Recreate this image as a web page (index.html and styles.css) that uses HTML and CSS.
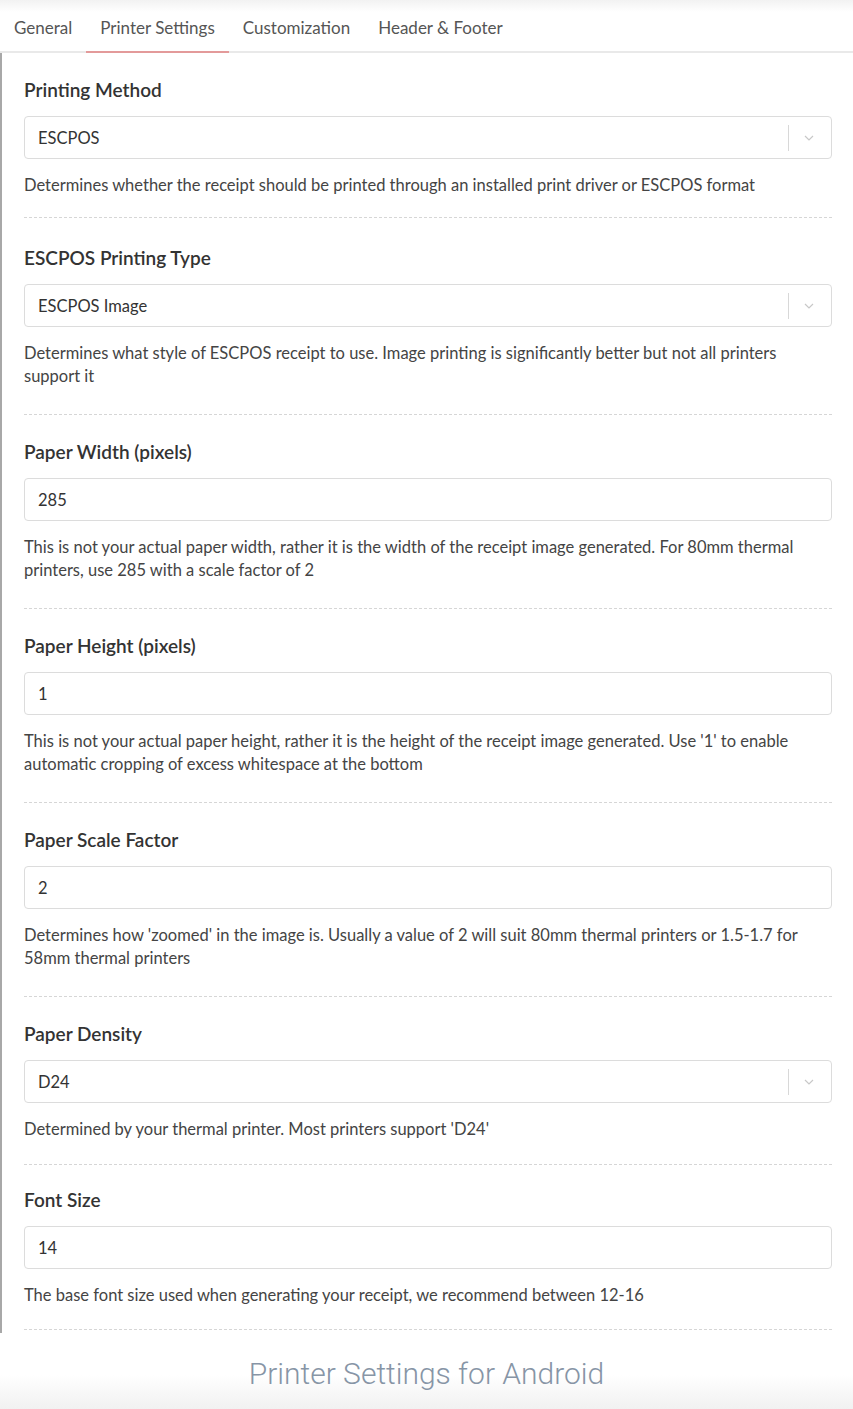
FILE: index.html
```html
<!DOCTYPE html>
<html lang="en">
<head>
<meta charset="utf-8">
<title>Printer Settings for Android</title>
<link rel="stylesheet" href="styles.css">
</head>
<body>
<div class="frame">
  <nav class="tabs">
    <span class="tab">General</span>
    <span class="tab active">Printer Settings</span>
    <span class="tab">Customization</span>
    <span class="tab">Header &amp; Footer</span>
  </nav>
  <div class="form">
    <section class="field">
      <h3 class="label">Printing Method</h3>
      <div class="control select"><span class="value">ESCPOS</span><span class="sep"></span><svg class="chev" width="10" height="6" viewBox="0 0 10 6"><path d="M1 1l4 4 4-4" fill="none" stroke="#c8c8c8" stroke-width="1.2"/></svg></div>
      <p class="help">Determines whether the receipt should be printed through an installed print driver or ESCPOS format</p>
    </section>
    <section class="field">
      <h3 class="label">ESCPOS Printing Type</h3>
      <div class="control select"><span class="value">ESCPOS Image</span><span class="sep"></span><svg class="chev" width="10" height="6" viewBox="0 0 10 6"><path d="M1 1l4 4 4-4" fill="none" stroke="#c8c8c8" stroke-width="1.2"/></svg></div>
      <p class="help">Determines what style of ESCPOS receipt to use. Image printing is significantly better but not all printers support it</p>
    </section>
    <section class="field">
      <h3 class="label">Paper Width (pixels)</h3>
      <div class="control"><span class="value">285</span></div>
      <p class="help">This is not your actual paper width, rather it is the width of the receipt image generated. For 80mm thermal printers, use 285 with a scale factor of 2</p>
    </section>
    <section class="field">
      <h3 class="label">Paper Height (pixels)</h3>
      <div class="control"><span class="value">1</span></div>
      <p class="help">This is not your actual paper height, rather it is the height of the receipt image generated. Use '1' to enable automatic cropping of excess whitespace at the bottom</p>
    </section>
    <section class="field">
      <h3 class="label">Paper Scale Factor</h3>
      <div class="control"><span class="value">2</span></div>
      <p class="help">Determines how 'zoomed' in the image is. Usually a value of 2 will suit 80mm thermal printers or 1.5-1.7 for 58mm thermal printers</p>
    </section>
    <section class="field">
      <h3 class="label">Paper Density</h3>
      <div class="control select"><span class="value">D24</span><span class="sep"></span><svg class="chev" width="10" height="6" viewBox="0 0 10 6"><path d="M1 1l4 4 4-4" fill="none" stroke="#c8c8c8" stroke-width="1.2"/></svg></div>
      <p class="help">Determined by your thermal printer. Most printers support 'D24'</p>
    </section>
    <section class="field">
      <h3 class="label">Font Size</h3>
      <div class="control"><span class="value">14</span></div>
      <p class="help">The base font size used when generating your receipt, we recommend between 12-16</p>
    </section>
  </div>
</div>
<footer class="footer">
  <p class="caption">Printer Settings for Android</p>
</footer>
</body>
</html>
```
FILE: styles.css
```css
* { box-sizing: border-box; }
html, body { margin: 0; padding: 0; background: #fff; }
body {
  font-family: Lato, "Open Sans", sans-serif;
  color: #333;
  width: 853px;
  min-height: 1409px;
  display: flex;
  flex-direction: column;
}

.frame {
  border-left: 2px solid #a8a8a8;
  padding-bottom: 3px;
}

.tabs {
  display: flex;
  height: 53px;
  align-items: stretch;
  border-bottom: 2px solid #e9e9e9;
  background: linear-gradient(#f2f2f2 0, #fff 12px);
  margin-left: -2px;
}
.tab {
  display: flex;
  align-items: center;
  padding: 3px 14px 0;
  font-size: 17px;
  color: #555;
  margin-bottom: -2px;
  border-bottom: 2px solid transparent;
}
.active { border-bottom-color: #e39a9a; }

.form { padding: 0 21px 0 22px; }

.field {
  padding: 25px 0 26px;
  border-bottom: 1px dashed #d6d6d6;
}
.field:first-child { padding: 25px 0 20px; }
.field:nth-child(2) { padding-top: 28px; }
.field:nth-child(6) { padding-bottom: 23px; }
.field:last-child { padding: 23px 0 22px; }

.label {
  margin: 0;
  font-size: 19px;
  font-weight: 600;
  line-height: 24px;
  color: #333;
}

.control {
  margin-top: 14px;
  height: 43px;
  border: 1px solid #dcdcdc;
  border-radius: 4px;
  display: flex;
  align-items: center;
  padding-left: 13px;
  font-size: 16.5px;
  color: #333;
}
.value { flex: 1; }
.sep {
  width: 1px;
  height: 26px;
  background: #d8d8d8;
}
.chev { margin: 0 17px 0 15px; }

.help {
  margin: 15px 0 0;
  font-size: 16.5px;
  line-height: 23px;
  color: #444;
}

.footer {
  flex: 1;
  background: linear-gradient(#fff 55%, #f1f1f1);
  padding-top: 22px;
}
.caption {
  margin: 0;
  text-align: center;
  font-family: Roboto, sans-serif;
  font-weight: 300;
  font-size: 30px;
  color: #8795a6;
  line-height: 38px;
}
```
